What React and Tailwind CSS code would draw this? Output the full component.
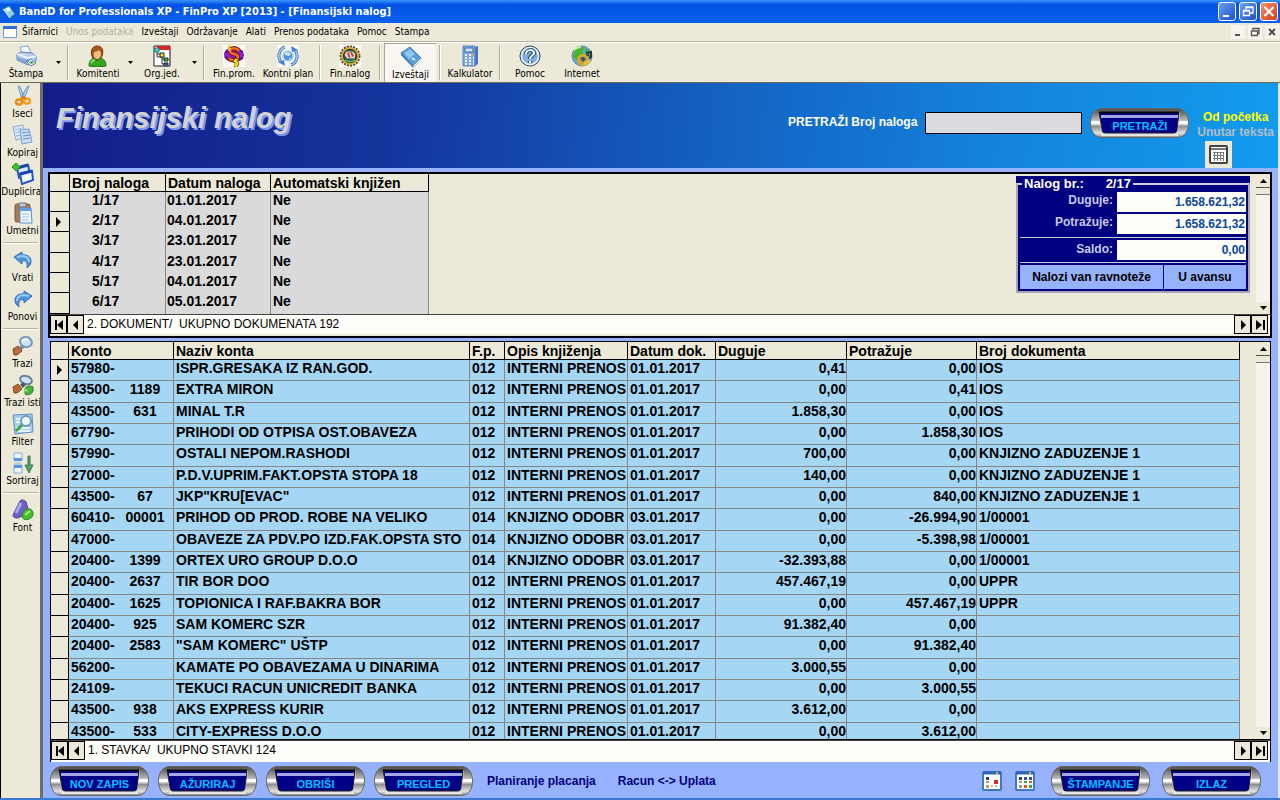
import React, { useState } from "react";

const menuItems = [
  { name: "Šifarnici" },
  { name: "Unos podataka", disabled: true },
  { name: "Izveštaji" },
  { name: "Održavanje" },
  { name: "Alati" },
  { name: "Prenos podataka" },
  { name: "Pomoc" },
  { name: "Stampa" },
];

const orders = [
  ["1/17", "01.01.2017", "Ne"],
  ["2/17", "04.01.2017", "Ne"],
  ["3/17", "23.01.2017", "Ne"],
  ["4/17", "23.01.2017", "Ne"],
  ["5/17", "04.01.2017", "Ne"],
  ["6/17", "05.01.2017", "Ne"],
];

const entries = [
  ["57980-", "", "ISPR.GRESAKA IZ RAN.GOD.", "012", "INTERNI PRENOS", "01.01.2017", "0,41", "0,00", "IOS"],
  ["43500-", "1189", "EXTRA MIRON", "012", "INTERNI PRENOS", "01.01.2017", "0,00", "0,41", "IOS"],
  ["43500-", "631", "MINAL T.R", "012", "INTERNI PRENOS", "01.01.2017", "1.858,30", "0,00", "IOS"],
  ["67790-", "", "PRIHODI OD OTPISA OST.OBAVEZA", "012", "INTERNI PRENOS", "01.01.2017", "0,00", "1.858,30", "IOS"],
  ["57990-", "", "OSTALI NEPOM.RASHODI", "012", "INTERNI PRENOS", "01.01.2017", "700,00", "0,00", "KNJIZNO ZADUZENJE 1"],
  ["27000-", "", "P.D.V.UPRIM.FAKT.OPSTA STOPA 18", "012", "INTERNI PRENOS", "01.01.2017", "140,00", "0,00", "KNJIZNO ZADUZENJE 1"],
  ["43500-", "67", "JKP\"KRU[EVAC\"", "012", "INTERNI PRENOS", "01.01.2017", "0,00", "840,00", "KNJIZNO ZADUZENJE 1"],
  ["60410-", "00001", "PRIHOD OD PROD. ROBE NA VELIKO", "014", "KNJIZNO ODOBR", "03.01.2017", "0,00", "-26.994,90", "1/00001"],
  ["47000-", "", "OBAVEZE ZA PDV.PO IZD.FAK.OPSTA STO", "014", "KNJIZNO ODOBR", "03.01.2017", "0,00", "-5.398,98", "1/00001"],
  ["20400-", "1399", "ORTEX URO GROUP D.O.O", "014", "KNJIZNO ODOBR", "03.01.2017", "-32.393,88", "0,00", "1/00001"],
  ["20400-", "2637", "TIR BOR DOO", "012", "INTERNI PRENOS", "01.01.2017", "457.467,19", "0,00", "UPPR"],
  ["20400-", "1625", "TOPIONICA I RAF.BAKRA BOR", "012", "INTERNI PRENOS", "01.01.2017", "0,00", "457.467,19", "UPPR"],
  ["20400-", "925", "SAM KOMERC SZR", "012", "INTERNI PRENOS", "01.01.2017", "91.382,40", "0,00", ""],
  ["20400-", "2583", "\"SAM KOMERC\" UŠTP", "012", "INTERNI PRENOS", "01.01.2017", "0,00", "91.382,40", ""],
  ["56200-", "", "KAMATE PO OBAVEZAMA U DINARIMA", "012", "INTERNI PRENOS", "01.01.2017", "3.000,55", "0,00", ""],
  ["24109-", "", "TEKUCI RACUN UNICREDIT BANKA", "012", "INTERNI PRENOS", "01.01.2017", "0,00", "3.000,55", ""],
  ["43500-", "938", "AKS EXPRESS KURIR", "012", "INTERNI PRENOS", "01.01.2017", "3.612,00", "0,00", ""],
  ["43500-", "533", "CITY-EXPRESS D.O.O", "012", "INTERNI PRENOS", "01.01.2017", "0,00", "3.612,00", ""],
];

function Icon({ children, size = 22 }) {
  return (
    <svg width={size} height={size} viewBox="0 0 22 22" fill="none" aria-hidden="true" className="shrink-0">
      {children}
    </svg>
  );
}

const icons = {
  printer: (
    <Icon>
      <path d="M5 2l8-1 3 7-8 3z" fill="#f4f9ff" stroke="#7fa6d8" />
      <path d="M2 9l4-2 11 1 4 3v5l-8 4L2 15z" fill="#bcd0ee" stroke="#6585b8" />
      <path d="M2 9l11 4 8-2" stroke="#f4f8ff" strokeWidth="1.5" />
      <path d="M3 12l9 3v4l-9-4z" fill="#87a4d3" />
      <path d="M11 16l5-2 5 4-5 3z" fill="#fff" stroke="#577bb0" />
      <path d="M14 17l3-1 2 2-3 1z" fill="#36a845" />
      <path d="M12 16l2-1 1 1-2 1z" fill="#3274d8" />
    </Icon>
  ),
  person: (
    <Icon>
      <path d="M5 11c-2-6 1-10 5-10 5 0 7 4 5 10l-2 4H7z" fill="#a65418" stroke="#70350b" />
      <path d="M7 7c2 0 4-1 5-2 1 1 2 2 2 4 0 3-2 5-4 5s-4-3-3-7z" fill="#f3bd84" />
      <path d="M2 21c0-5 2-7 5-8 1 3 5 3 6 0 4 1 6 3 6 8-5 1-12 1-17 0z" fill="#37a51f" stroke="#217a12" />
      <path d="M4 18c1-2 3-3 4-3" stroke="#90e272" strokeWidth="2" />
    </Icon>
  ),
  org: (
    <Icon>
      <path d="M3 1h16v20H3z" fill="#fff" stroke="#222" />
      <path d="M6 1h13v4H6z" fill="#df241d" />
      <path d="M6 6v6h5v7h4M6 9h3M11 14h3" stroke="#333" />
      <path d="M4 3h4v4H4z" fill="#39dfe2" stroke="#127c83" />
      <path d="M9 8h4v4H9z" fill="#f4e62f" stroke="#222" />
      <path d="M13 13h4v3h-4z" fill="#33c835" stroke="#222" />
      <path d="M13 18h4v3h-4z" fill="#2957df" stroke="#222" />
      <path d="M19 5v16H7" stroke="#777" />
    </Icon>
  ),
  money: (
    <Icon>
      <path d="M0 0h22v22H0z" fill="#fbfaf6" />
      <path d="M4 4h6c6-1 11 2 11 6s-4 7-10 7C5 17 1 14 1 10c0-3 1-4 3-6z" fill="#8a1fc4" />
      <path d="M2 8l4-3M2 12l4 3M20 7l-4-2M20 13l-4 2" stroke="#4c0785" strokeWidth="1.500" />
      <path d="M16 6c-3-4-9-3-9 0 0 4 8 2 8 6 0 4-7 4-9 1" stroke="#6b1a10" strokeWidth="4.500" />
      <path d="M16 6c-3-4-9-3-9 0 0 4 8 2 8 6 0 4-7 4-9 1" stroke="#f7672a" strokeWidth="2.500" />
      <path d="M8 1c-2-1-4 1-2 2s1 3-1 2M6 0v6" stroke="#e9d41f" strokeWidth="1.200" />
      <path d="M15 15c-3-1-5 1-2 2s2 4-2 3M13 14v8" stroke="#5d4a00" strokeWidth="3" />
      <path d="M15 15c-3-1-5 1-2 2s2 4-2 3M13 14v8" stroke="#f7df26" strokeWidth="1.500" />
    </Icon>
  ),
  refresh: (
    <Icon>
      <path d="M0 0h22v22H0z" fill="#fbfaf6" />
      <circle cx="11" cy="11" r="5" fill="#4f93e0" stroke="#a9cdf4" strokeWidth="1.5" />
      <path d="M8 8l3-1 3 2-2 2-4-1zM12 13l2 0-2 2z" fill="#d4eaff" />
      <path d="M8 2C2 4 0 12 4 17M14 20c6-2 8-10 4-15" stroke="#3565b4" strokeWidth="3" />
      <path d="M8 2C2 4 0 12 4 17M14 20c6-2 8-10 4-15" stroke="#a9cff5" strokeWidth="1.500" />
      <path d="M1 17l6-2 1 6zM21 5l-6 2-1-6z" fill="#4a7fd0" />
    </Icon>
  ),
  gear: (
    <Icon>
      <path d="M0 0h22v22H0z" fill="#fbfaf6" />
      <circle cx="11" cy="11" r="9" stroke="#5e4716" strokeWidth="3" strokeDasharray="2 1" />
      <circle cx="11" cy="11" r="8" fill="#2c6b4a" stroke="#d9a93a" strokeWidth="2" />
      <circle cx="11" cy="11" r="6.500" stroke="#173a2a" />
      <path d="M5 10l2-4h7l3 3-1 5H8z" fill="#d9dcd4" stroke="#444" />
      <path d="M8 8l5-1 2 4-5 2z" fill="#d8321f" />
      <path d="M11 8l1 4" stroke="#fff" strokeWidth="1.500" />
      <path d="M6 15c3 2 7 2 10 0" stroke="#6cc08a" strokeWidth="1.500" />
    </Icon>
  ),
  book: (
    <Icon>
      <path d="M1 7l9-6 11 11-8 8z" fill="#5b9fd6" stroke="#3f7db4" />
      <path d="M1 7l12 13v1.500L1 9z" fill="#2c6ca8" />
      <path d="M13 20l8-8v2l-8 8z" fill="#f1f8ff" stroke="#6fa0c6" strokeWidth=".500" />
      <path d="M4 7l6-4 5 5-6 5z" fill="#8cc4ec" />
      <path d="M12 12l3 2" stroke="#d5f1ff" strokeWidth="2" />
    </Icon>
  ),
  calculator: (
    <Icon>
      <path d="M4 1l12 1 3-1v18l-3 2H4z" fill="#4675be" />
      <path d="M4 1h12v20H4z" fill="#7ea8e4" stroke="#5b83bf" />
      <path d="M6 3h8v4H6z" fill="#cce8ff" stroke="#3c69aa" />
      <path d="M6 10h2m2 0h2m2 0h1M6 13h2m2 0h2m2 0h1M6 16h2m2 0h2m2 0h1M6 19h2m2 0h2m2 0h1" stroke="#eef6ff" strokeWidth="2" />
      <path d="M13 9h2v2h-2z" fill="#f19742" />
    </Icon>
  ),
  help: (
    <Icon>
      <circle cx="11" cy="11" r="10" fill="#a9cdf1" stroke="#31445c" />
      <circle cx="11" cy="11" r="8.5" fill="#80aee0" stroke="#e8f5ff" strokeWidth="1.5" />
      <path d="M7 9c0-5 8-5 8-1 0 3-4 2-4 6M11 16v2" stroke="#274c7a" strokeWidth="4" />
      <path d="M7 9c0-5 8-5 8-1 0 3-4 2-4 6M11 16v2" stroke="#fff" strokeWidth="2" />
    </Icon>
  ),
  globe: (
    <Icon>
      <circle cx="11" cy="11" r="10" fill="#6aa5dd" stroke="#618bb0" />
      <path d="M4 4l6-3 4 2-3 4 3 3-6 1-2 5-4-4zM15 3l4 4-2 4-3-3z" fill="#48b52c" />
      <path d="M3 5c2-2 5-3 7-3" stroke="#cceeab" strokeWidth="2" />
      <path d="M15 8l5-1v5l-2 1M14 11l4-1" stroke="#27363a" strokeWidth="2" />
      <circle cx="12" cy="15" r="5" fill="#b2a75e" stroke="#e0ab19" strokeWidth="2" />
      <path d="M9 13l3-1 3 2-3 3z" fill="#454c5b" />
      <path d="M13 19l6-3" stroke="#edc52b" strokeWidth="3" />
    </Icon>
  ),
  cut: (
    <Icon>
      <path d="M6 1l2 1 5 11-3 1zM17 1l-2 1-6 11 3 1z" fill="#b9d2f0" stroke="#6c95ca" />
      <ellipse cx="7" cy="17" rx="3" ry="2.500" stroke="#f08a17" strokeWidth="2.500" />
      <ellipse cx="15" cy="16" rx="3" ry="2.500" stroke="#f5a11b" strokeWidth="2.500" />
      <path d="M9 14l2-2 3 2" stroke="#e17c0f" strokeWidth="2" />
    </Icon>
  ),
  copy: (
    <Icon>
      <path d="M1 3l10-2 3 12-10 3z" fill="#dbe9fa" stroke="#87a9d5" />
      <path d="M3 6l7-2M4 9l6-2M4 12l5-1" stroke="#93b2da" />
      <path d="M8 6l9-1 3 13-10 2z" fill="#c8dcf6" stroke="#7a9dcf" />
      <path d="M10 9l7-1M11 12l7-1M11 15l7-1" stroke="#6d91c5" />
    </Icon>
  ),
  duplicate: (
    <Icon>
      <path d="M5 5l11-3 2 9-11 4z" fill="#d7e8ff" stroke="#2855c4" strokeWidth="2" />
      <path d="M8 11l12-3 1 9-11 4z" fill="#eff7ff" stroke="#2855c4" strokeWidth="2" />
      <path d="M8 11l12-3M5 5l11-3" stroke="#1e45ab" strokeWidth="3" />
      <path d="M4 0l4 4-4 4-4-4z" fill="#3fc42b" stroke="#22891c" />
    </Icon>
  ),
  paste: (
    <Icon>
      <rect x="3" y="2" width="15" height="18" rx="2" fill="#a67c52" stroke="#785735" />
      <path d="M7 1h7v4H7z" fill="#c5c9cf" stroke="#6c737c" />
      <path d="M8 6h11l1 15H8z" fill="#eff7ff" stroke="#5d8acc" />
      <path d="M8 6h11v3H8z" fill="#5f9fe8" />
      <path d="M10 12h7M10 15h7M10 18h7" stroke="#9ebfe6" />
    </Icon>
  ),
  undo: (
    <Icon>
      <path d="M2 8l8-5v3c7-1 11 4 8 10l-3 3c1-6-1-8-5-7v3z" fill="#4e94db" stroke="#2c6fb7" />
      <path d="M5 8l5-1c5 0 7 2 7 6" stroke="#99cbf2" strokeWidth="2" />
    </Icon>
  ),
  redo: (
    <Icon>
      <path d="M20 8l-8-5v3C5 5 1 10 4 16l3 3c-1-6 1-8 5-7v3z" fill="#4e94db" stroke="#2c6fb7" />
      <path d="M17 8l-5-1C7 7 5 9 5 13" stroke="#99cbf2" strokeWidth="2" />
    </Icon>
  ),
  find: (
    <Icon>
      <path d="M1 14l5-3 4 5-5 4H2z" fill="#b96a42" stroke="#8a4a2b" />
      <path d="M7 12l3-2 2 3-3 2z" fill="#64809c" />
      <ellipse cx="14" cy="7" rx="6" ry="5" transform="rotate(18 14 7)" fill="#cee4fa" stroke="#7898bc" strokeWidth="2" />
      <path d="M10 6c2-2 4-2 6-1" stroke="#fff" strokeWidth="2" />
    </Icon>
  ),
  findNext: (
    <Icon>
      <path d="M1 13l5-3 4 5-5 4H2z" fill="#b96a32" stroke="#874820" />
      <ellipse cx="14" cy="6" rx="6" ry="4" transform="rotate(18 14 6)" fill="#cee4fa" stroke="#69829d" strokeWidth="2" />
      <path d="M8 11l3-3 3 3-3 3z" fill="#4c5966" />
      <path d="M13 15c1-3 5-4 8-2v4c-1 3-5 5-8 3z" fill="#46b23b" stroke="#298424" />
      <path d="M12 14l5 2-4 3" fill="#79dc5d" />
    </Icon>
  ),
  filter: (
    <Icon>
      <path d="M1 2l19-1 1 18-18 2z" fill="#adcdf0" stroke="#648fc0" />
      <path d="M4 6h7M4 9h5M4 15h14M5 18h13" stroke="#e9f5ff" strokeWidth="2" />
      <circle cx="14" cy="8" r="5" fill="#eaf7fd" stroke="#6f9cba" strokeWidth="2" />
      <path d="M10 12l-6 6" stroke="#3daa3e" strokeWidth="3" />
    </Icon>
  ),
  sort: (
    <Icon>
      <path d="M2 1h8v7H2zM2 13h8v8H2z" fill="#eef7ff" stroke="#80aee0" />
      <path d="M2 6h8v3H2zM2 13h8v3H2z" fill="#5898de" />
      <path d="M3 11h6" stroke="#8db4dd" />
      <path d="M16 4h2v9h3l-4 8-4-8h3z" fill="#4fa269" stroke="#37784c" />
    </Icon>
  ),
  font: (
    <Icon>
      <path d="M1 16L8 2c2-2 5-1 6 1l3 10-9 5c-3 2-7 1-7-2z" fill="#6b61c4" stroke="#4c4399" />
      <path d="M4 14L9 4" stroke="#aba5ed" strokeWidth="3" />
      <path d="M10 18c0-5 4-9 8-8 3 1 4 5 2 8-3 3-8 4-10 0z" fill="#48bc2e" stroke="#298d19" />
      <path d="M13 16l5-4" stroke="#a1ee75" strokeWidth="2" />
    </Icon>
  ),
};

const toolbar = [
  { name: "Štampa", icon: icons.printer, arrow: true },
  "sep",
  { name: "Komitenti", icon: icons.person, arrow: true },
  { name: "Org.jed.", icon: icons.org, arrow: true },
  "sep",
  { name: "Fin.prom.", icon: icons.money },
  { name: "Kontni plan", icon: icons.refresh, wide: true },
  "sep",
  { name: "Fin.nalog", icon: icons.gear },
  "sep",
  { name: "Izveštaji", icon: icons.book, pressed: true },
  "sep",
  { name: "Kalkulator", icon: icons.calculator },
  "sep",
  { name: "Pomoc", icon: icons.help },
  { name: "Internet", icon: icons.globe },
];

const sidebar = [
  { name: "Iseci", icon: icons.cut },
  { name: "Kopiraj", icon: icons.copy },
  { name: "Dupliciraj", icon: icons.duplicate },
  { name: "Umetni", icon: icons.paste },
  "sep",
  { name: "Vrati", icon: icons.undo },
  { name: "Ponovi", icon: icons.redo },
  "sep",
  { name: "Trazi", icon: icons.find },
  { name: "Trazi isti", icon: icons.findNext },
  { name: "Filter", icon: icons.filter },
  { name: "Sortiraj", icon: icons.sort },
  "sep",
  { name: "Font", icon: icons.font },
];

function TitleBar() {
  return (
    <header className="h-[23px] shrink-0 flex items-center pl-0.5 pr-0.5 bg-linear-to-b from-[#3a93fb] via-[#0453e4] via-20% to-[#0660ee]">
      <svg width="14" height="16" viewBox="0 0 14 16" fill="none" aria-hidden="true">
        <path d="M1 5l6-3 6 8-5 4z" fill="#8fd0e8" stroke="#2b7396" />
        <path d="M3 5l4-2 2 3-4 2z" fill="#e8fbff" />
        <path d="M1 5l7 9" stroke="#fff" />
      </svg>
      <h1 className="flex-1 pl-[3px] text-[11px] leading-4 font-bold text-white">
        BandD for Professionals XP - FinPro XP [2013] - [Finansijski nalog]
      </h1>
      <div className="flex gap-[3px]">
        <button aria-label="Minimize" className="w-[18px] h-[19px] rounded-[3px] border border-white bg-linear-to-br from-[#6b9cf5] to-[#1c4fd0]">
          <svg viewBox="0 0 16 17" className="size-full">
            <path d="M4 12h6v2H4z" fill="#fff" />
          </svg>
        </button>
        <button aria-label="Restore" className="w-[18px] h-[19px] rounded-[3px] border border-white bg-linear-to-br from-[#6b9cf5] to-[#1c4fd0]">
          <svg viewBox="0 0 16 17" fill="none" className="size-full">
            <path d="M6 7V4h7v6h-3M6 4.5h7M3.5 7.5h6v5h-6zM3.5 8h6" stroke="#fff" strokeWidth="1.3" />
          </svg>
        </button>
        <button aria-label="Close" className="w-[18px] h-[19px] rounded-[3px] border border-white bg-linear-to-br from-[#f0906c] to-[#d23a0c]">
          <svg viewBox="0 0 16 17" fill="none" className="size-full">
            <path d="M3.5 4l9 9M12.5 4l-9 9" stroke="#fff" strokeWidth="2" />
          </svg>
        </button>
      </div>
    </header>
  );
}

function MenuBar() {
  return (
    <nav className="h-[19px] shrink-0 flex items-center pl-[3px] border-b border-[#b8b5a4]">
      <svg width="14" height="12" viewBox="0 0 14 12" className="mr-[5px]" aria-hidden="true">
        <path d="M.5.5h13v11H.5z" fill="#fff" stroke="#6f9be0" />
        <path d="M0 0h14v3H0z" fill="#2f6fd6" />
      </svg>
      <div className="flex-1 flex gap-2">
        {menuItems.map((item) => (
          <button key={item.name} disabled={item.disabled} className="leading-4 disabled:text-[#b3b0a1]">
            {item.name}
          </button>
        ))}
      </div>
      <div className="flex gap-[3px] pr-px">
        <button aria-label="Minimize document" className="size-[14px] bg-[#f6f4ec]">
          <svg viewBox="0 0 14 14"><path d="M4 9h5v2H4z" fill="#555" /></svg>
        </button>
        <button aria-label="Restore document" className="size-[14px] bg-[#f6f4ec]">
          <svg viewBox="0 0 14 14" fill="none"><path d="M5 5V3.5h6v5H9.500M3.500 6h6v4.500h-6z" stroke="#555" strokeWidth="1.300" /></svg>
        </button>
        <button aria-label="Close document" className="size-[14px] bg-[#f6f4ec]">
          <svg viewBox="0 0 14 14" fill="none"><path d="M4 4l6 6M10 4l-6 6" stroke="#444" strokeWidth="1.800" /></svg>
        </button>
      </div>
    </nav>
  );
}

function Toolbar() {
  return (
    <div className="h-[41px] shrink-0 flex border-t border-white border-b border-b-[#6f6a58]">
      {toolbar.map((item, index) =>
        item === "sep" ? (
          <div key={index} className="w-2 py-0.5 flex justify-center">
            <div className="w-0.5 border-l border-[#b5b2a2] bg-white"></div>
          </div>
        ) : (
          <div key={item.name} className="flex">
            <button
              className={`flex flex-col items-center pt-0.5 whitespace-nowrap ${item.wide ? "w-14" : "w-[52px]"} ${
                item.pressed ? "bg-[#f7f6f0] border-l border-t border-[#a9a696]" : ""
              }`}
            >
              {item.icon}
              <span className="leading-[14px]">{item.name}</span>
            </button>
            {item.arrow && (
              <button aria-label={`${item.name} meni`} className="w-3 flex items-center justify-center">
                <svg width="5" height="3" viewBox="0 0 5 3"><path d="M0 0h5L2.500 3z" fill="#000" /></svg>
              </button>
            )}
          </div>
        )
      )}
    </div>
  );
}

function Sidebar() {
  return (
    <aside className="w-[43px] shrink-0 flex flex-col border-l border-black border-r-3 border-r-[#6f6d66] overflow-hidden">
      {sidebar.map((item, index) =>
        item === "sep" ? (
          <div key={index} className="h-2 px-0.5 flex items-center">
            <div className="h-0.5 flex-1 border-t border-[#b5b2a2] bg-white"></div>
          </div>
        ) : (
          <button key={item.name} className="h-[39px] pl-1 pt-0.5 shrink-0 flex flex-col items-center whitespace-nowrap">
            {item.icon}
            <span className="leading-[14px]">{item.name}</span>
          </button>
        )
      )}
    </aside>
  );
}

function PillButton({ children }) {
  return (
    <button className="relative w-[99px] h-[30px] shrink-0 pt-1.5 text-[11px] leading-4 font-bold text-[#00c0ff]">
      <svg viewBox="0 0 99 30" fill="none" className="absolute inset-0 size-full" aria-hidden="true">
        <defs>
          <linearGradient id="metal" x1="0" y1="0" x2="0" y2="1">
            <stop offset="0" stopColor="#4a4a4a" />
            <stop offset=".25" stopColor="#8d8d8d" />
            <stop offset=".46" stopColor="#c9c9c9" />
            <stop offset=".5" stopColor="#ffffff" />
            <stop offset=".62" stopColor="#8f8f8f" />
            <stop offset=".85" stopColor="#e2e2e2" />
            <stop offset="1" stopColor="#8a8a8a" />
          </linearGradient>
        </defs>
        <path d="M12 .5h75c8 0 11.500 7 11.500 14.500S95 29.500 87 29.500H12C4 29.500.5 22.500.5 15S4 .5 12 .5z" fill="url(#metal)" stroke="#666" />
        <path d="M1 14.500h9M89 14.500h9" stroke="#fff" strokeWidth="3" />
        <path d="M11 27h77" stroke="#e6e6e6" strokeWidth="2" />
        <path d="M9 4h81l-2 17c0 3-1 4-4 4H15c-3 0-4-1-4-4z" fill="#d8d8d8" />
        <path d="M9 4h80l-2 17c0 3-1 4-4 4H16c-3 0-4-1-4-4z" fill="#000086" stroke="#222" />
        <path d="M9 4.500h80" stroke="#000" strokeWidth="1.500" />
        <path d="M11 8.500h77" stroke="#a4a4e4" strokeWidth="3" />
      </svg>
      <span className="relative">{children}</span>
    </button>
  );
}

function PageHeader() {
  const [search, setSearch] = useState("");
  return (
    <div className="h-[85px] shrink-0 flex items-start pl-[13px] pr-1 bg-[linear-gradient(96deg,#141c8a,#14349c_28%,#1462c2_55%,#1484dc_78%,#129cee)]">
      <h2 className="flex-1 pt-[17px] text-[29px] leading-9 font-bold italic text-[#d2d2d2] [text-shadow:2px_2px_0_#7c98ee]">
        Finansijski nalog
      </h2>
      <label htmlFor="search" className="pt-[31px] pr-2 text-[12px] leading-4 font-bold text-white">
        PRETRAŽI Broj naloga
      </label>
      <input
        id="search"
        value={search}
        onChange={(e) => setSearch(e.target.value)}
        className="mt-[29px] w-[157px] h-[22px] px-1 text-[12px] bg-[#dcdce0] border border-black outline-none"
      />
      <div className="mt-[25px] ml-2 mr-2">
        <PillButton>PRETRAŽI</PillButton>
      </div>
      <div className="pt-[27px] flex flex-col text-[12px] leading-[15px] font-bold whitespace-nowrap">
        <button className="text-[#ffff00]">Od početka</button>
        <button className="text-[#b4bcc8]">Unutar teksta</button>
        <button aria-label="Kalendar" className="ml-2 mt-px size-[27px] flex items-center justify-center bg-[#ece9d8]">
          <svg width="20" height="20" viewBox="0 0 20 20" fill="none">
            <rect x="1" y="1" width="17" height="17" rx="1" fill="#fff" stroke="#444" strokeWidth="2" />
            <path d="M2 4h15" stroke="#777" strokeWidth="2" />
            <path d="M4 7.500h11M4 10.500h11M4 13.500h11M5.500 7v9M8.500 7v9M11.500 7v9M14.500 7v9" stroke="#777" />
          </svg>
        </button>
      </div>
    </div>
  );
}

function ScrollBar() {
  return (
    <div className="w-[14px] shrink-0 flex flex-col bg-[#f5f4ec]">
      <button aria-label="Gore" className="h-[14px] flex items-center justify-center bg-[#ece9d8] border-b border-[#555]">
        <svg width="7" height="4" viewBox="0 0 7 4"><path d="M0 4h7L3.500 0z" fill="#000" /></svg>
      </button>
      <div className="h-[7px] bg-[#ece9d8] border-b border-[#777]"></div>
      <div className="flex-1"></div>
      <button aria-label="Dole" className="h-3 flex items-center justify-center bg-[#ece9d8]">
        <svg width="7" height="4" viewBox="0 0 7 4"><path d="M0 0h7L3.500 4z" fill="#000" /></svg>
      </button>
    </div>
  );
}

const navArrows = {
  first: "M2 1h2v10H2zM10 1v10L4 6z",
  prev: "M8 1v10L3 6z",
  next: "M4 1v10l5-5z",
  last: "M2 1v10l6-5zM9 1h2v10H9z",
};

function NavButton({ label, arrow }) {
  return (
    <button aria-label={label} className="w-[17px] flex items-center justify-center bg-[#ece9d8] border border-black">
      <svg width="12" height="12" viewBox="0 0 12 12"><path d={navArrows[arrow]} fill="#000" /></svg>
    </button>
  );
}

function RecordNav({ children }) {
  return (
    <div className="h-5 shrink-0 flex pr-0.5 bg-[#fdfdf9] border-t border-[#444]">
      <NavButton label="Prvi" arrow="first" />
      <NavButton label="Prethodni" arrow="prev" />
      <p className="flex-1 pl-[3px] text-[12px] leading-[19px] whitespace-pre">{children}</p>
      <NavButton label="Sledeći" arrow="next" />
      <NavButton label="Poslednji" arrow="last" />
    </div>
  );
}

function RowMarker({ active }) {
  return (
    <td className="p-0 align-middle bg-[#ece9d8] border-r border-b border-black">
      {active && (
        <svg width="5" height="10" viewBox="0 0 5 10" className="ml-1.5"><path d="M0 0v10l5-5z" fill="#000" /></svg>
      )}
    </td>
  );
}

function Summary() {
  return (
    <div className="w-[234px] shrink-0 mt-0.5 mr-1.5 self-start bg-[#000080] font-bold text-[12px]">
      <fieldset className="min-w-0 px-0.5 pb-0.5 border-2 border-[#d4d2d8] border-x-[#a8a6b4] border-b-[#a8a6b4]">
        <legend className="ml-0.5 px-0.5 text-[13px] leading-4 text-white whitespace-pre">Nalog br.:{"      "}2/17</legend>
        <div className="flex flex-col gap-0.5 pb-[3px] text-[#c8c8e8] border-b border-[#c8c8d8]">
          <div className="flex justify-end">
            <label htmlFor="duguje" className="pr-1 leading-4">Duguje:</label>
            <input id="duguje" readOnly value="1.658.621,32" className="w-[129px] h-5 px-px bg-[#fdfdf9] text-right text-[#0a479e]" />
          </div>
          <div className="flex justify-end">
            <label htmlFor="potrazuje" className="pr-1 leading-4">Potražuje:</label>
            <input id="potrazuje" readOnly value="1.658.621,32" className="w-[129px] h-5 px-px bg-[#fdfdf9] text-right text-[#0a479e]" />
          </div>
        </div>
        <div className="flex justify-end pt-0.5 pb-0.5 text-[#c8c8e8] border-b border-[#c8c8d8]">
          <label htmlFor="saldo" className="pr-1 leading-[18px]">Saldo:</label>
          <input id="saldo" readOnly value="0,00" className="w-[129px] h-5 px-px bg-[#fdfdf9] text-right text-[#0a479e]" />
        </div>
        <div className="flex gap-px pt-0.5 leading-6 text-black">
          <button className="w-[143px] bg-[#97b2fc]">Nalozi van ravnoteže</button>
          <button className="flex-1 bg-[#97b2fc]">U avansu</button>
        </div>
      </fieldset>
    </div>
  );
}

function OrdersPanel() {
  const [selected, setSelected] = useState(1);
  return (
    <section className="mt-1 ml-[5px] mr-1.5 shrink-0 border-2 border-black bg-[#ece9d8] pb-0.5">
      <div className="flex">
        <div className="flex-1">
          <table className="w-[379px] table-fixed border-separate border-spacing-0 text-[14px] leading-4 font-bold text-left">
            <colgroup>
              <col className="w-[20px]" />
              <col className="w-[96px]" />
              <col className="w-[105px]" />
              <col />
            </colgroup>
            <thead>
              <tr className="h-[18px] whitespace-nowrap">
                <th className="p-0 border-r border-b border-black"></th>
                <th className="py-0 px-0.5 border-r border-b border-black">Broj naloga</th>
                <th className="py-0 px-0.5 border-r border-b border-black">Datum naloga</th>
                <th className="py-0 px-0.5 border-r border-b border-black">Automatski knjižen</th>
              </tr>
            </thead>
            <tbody>
              {orders.map((order, index) => (
                <tr key={order[0]} onClick={() => setSelected(index)} className="h-[20px] nth-[3n]:h-[21px]">
                  <RowMarker active={selected === index} />
                  <td className="py-0 pl-[22px] pr-0 align-top bg-[#dadada] border-r border-[#888]">{order[0]}</td>
                  <td className="py-0 px-px align-top bg-[#dadada] border-r border-[#888]">{order[1]}</td>
                  <td className="py-0 px-0.5 align-top bg-[#dadada] border-r border-[#888]">{order[2]}</td>
                </tr>
              ))}
            </tbody>
          </table>
        </div>
        <Summary />
        <ScrollBar />
      </div>
      <RecordNav>2. DOKUMENT/  UKUPNO DOKUMENATA 192</RecordNav>
    </section>
  );
}

const cell = "py-0 pl-0.5 pr-0 align-top overflow-hidden border-r border-b border-[#858585]";
const headCell = "py-0 pl-0.5 pr-0 border-r border-b border-black";

function EntriesPanel() {
  const [selected, setSelected] = useState(0);
  return (
    <section className="mt-[3px] ml-[7px] mr-[7px] flex-1 min-h-0 flex flex-col border border-black border-b-0 bg-[#fdfdf9] pb-0.5">
      <div className="flex-1 min-h-0 flex overflow-hidden border-b border-black bg-[#ece9d8]">
        <div className="flex-1 pr-4">
          <table className="w-full table-fixed border-separate border-spacing-0 text-[14px] leading-4 font-bold text-left whitespace-nowrap">
            <colgroup>
              <col className="w-[18px]" />
              <col className="w-[105px]" />
              <col className="w-[296px]" />
              <col className="w-[35px]" />
              <col className="w-[123px]" />
              <col className="w-[88px]" />
              <col className="w-[131px]" />
              <col className="w-[130px]" />
              <col />
            </colgroup>
            <thead>
              <tr className="h-[18px]">
                <th className={headCell}></th>
                <th className={headCell}>Konto</th>
                <th className={headCell}>Naziv konta</th>
                <th className={headCell}>F.p.</th>
                <th className={headCell}>Opis knjiženja</th>
                <th className={headCell}>Datum dok.</th>
                <th className={headCell}>Duguje</th>
                <th className={headCell}>Potražuje</th>
                <th className={headCell}>Broj dokumenta</th>
              </tr>
            </thead>
            <tbody>
              {entries.map((entry, index) => (
                <tr key={index} onClick={() => setSelected(index)} className="h-[21px] nth-[3n+2]:h-[22px] bg-[#a5d7f4]">
                  <RowMarker active={selected === index} />
                  <td className={cell}>
                    <div className="flex">
                      <span className="w-[54px]">{entry[0]}</span>
                      <span className="w-10 text-center">{entry[1]}</span>
                    </div>
                  </td>
                  <td className={cell}>{entry[2]}</td>
                  <td className={cell}>{entry[3]}</td>
                  <td className={cell}>{entry[4]}</td>
                  <td className={cell}>{entry[5]}</td>
                  <td className={`${cell} text-right`}>{entry[6]}</td>
                  <td className={`${cell} text-right`}>{entry[7]}</td>
                  <td className={cell}>{entry[8]}</td>
                </tr>
              ))}
            </tbody>
          </table>
        </div>
        <ScrollBar />
      </div>
      <RecordNav>1. STAVKA/  UKUPNO STAVKI 124</RecordNav>
    </section>
  );
}

function SheetIcon({ full }) {
  return (
    <svg width="20" height="20" viewBox="0 0 20 20" fill="none">
      <rect x="1" y="1" width="18" height="18" rx="1" fill="#fff" stroke="#3f78c4" strokeWidth="2" />
      <path d="M1 2h18" stroke="#2f65b8" strokeWidth="3" />
      <path d="M14 2h2" stroke="#f3a93c" strokeWidth="2" />
      <path d="M4 6h3v3H4z" fill="#3a4a66" />
      <path d="M4 10h3v2H4zM4 14h3v3H4z" fill="#b0966a" />
      {full ? (
        <>
          <path d="M9 6h3v3H9zM14 6h3v3h-3z" fill="#35558c" />
          <path d="M9 10h3v2H9zM14 14h3v3h-3z" fill="#38a048" />
          <path d="M9 14h3v3H9zM14 10h3v2h-3z" fill="#d05b3a" />
        </>
      ) : (
        <>
          <path d="M9 14h2v2H9zM13 14h2v2h-2z" fill="#c9b48c" />
          <path d="M12 9h4v4h-4z" fill="#d0342a" />
        </>
      )}
    </svg>
  );
}

function Footer() {
  return (
    <footer className="h-9 shrink-0 flex items-center pl-[7px] pr-[17px] pt-px text-[12px] leading-4 font-bold text-[#000080]">
      <div className="flex gap-[9px]">
        <PillButton>NOV ZAPIS</PillButton>
        <PillButton>AŽURIRAJ</PillButton>
        <PillButton>OBRIŠI</PillButton>
        <PillButton>PREGLED</PillButton>
      </div>
      <button className="ml-[14px]">Planiranje placanja</button>
      <button className="ml-[22px]">Racun &lt;-&gt; Uplata</button>
      <div className="flex-1"></div>
      <button aria-label="Kartica" className="mr-[13px]"><SheetIcon /></button>
      <button aria-label="Tabela" className="mr-4"><SheetIcon full /></button>
      <div className="flex gap-3">
        <PillButton>ŠTAMPANJE</PillButton>
        <PillButton>IZLAZ</PillButton>
      </div>
    </footer>
  );
}

function App() {
  return (
    <div className="h-screen flex flex-col overflow-hidden bg-[#ece9d8] border-b-2 border-[#3b78d4] text-black text-[10px] font-['DejaVu_Sans_Condensed','DejaVu_Sans',sans-serif]">
      <TitleBar />
      <MenuBar />
      <Toolbar />
      <div className="flex-1 min-h-0 flex">
        <Sidebar />
        <main className="flex-1 min-w-0 flex flex-col bg-[#97b2fc] border-r-2 border-[#dfe6fa] font-['Liberation_Sans',Arial,sans-serif]">
          <PageHeader />
          <OrdersPanel />
          <EntriesPanel />
          <Footer />
        </main>
      </div>
    </div>
  );
}

export default App;
